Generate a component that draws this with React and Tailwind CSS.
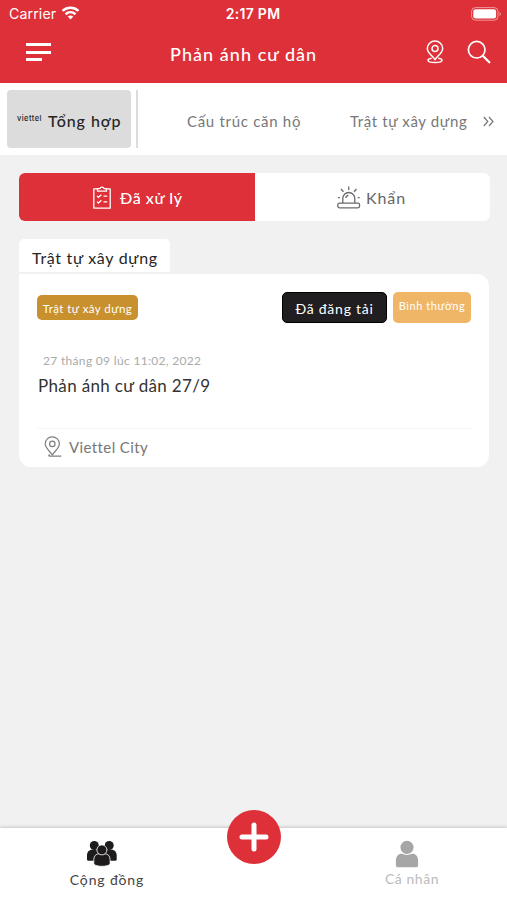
import React from 'react';

function WifiIcon() {
  return (
    <svg width="19" height="14" viewBox="0 0 18 14" fill="none" stroke="#fff" strokeWidth="2.500">
      <path d="M1 4.9C5.6.7 12.4.7 17 4.9" />
      <path d="M4 8.2c2.9-2.6 7.100-2.600 10 0" />
      <path d="M6.200 10.600a3.900 3.900 0 0 1 5.600 0L9 13.500z" fill="#fff" stroke="none" />
    </svg>
  );
}

function BatteryIcon() {
  return (
    <svg width="31" height="14" viewBox="0 0 31 14" fill="none">
      <rect x=".6" y=".6" width="26.400" height="12.600" rx="3.800" stroke="#fff" strokeOpacity=".5" />
      <rect x="2.300" y="2.200" width="22.800" height="9.400" rx="2.300" fill="#fff" />
      <path d="M28.500 5c1.900.8 1.900 3.200 0 4z" fill="#fff" fillOpacity=".5" />
    </svg>
  );
}

function HeaderPin() {
  return (
    <svg width="18" height="24" viewBox="0 0 18 24" fill="none" stroke="#fff" strokeWidth="1.500" strokeLinejoin="round">
      <path d="M9 19.700C6.200 15.400 1.300 12.700 1.300 8.400a7.700 7.400 0 0 1 15.400 0c0 4.300-4.900 7-7.700 11.300z" />
      <circle cx="9" cy="8.600" r="3" />
      <path d="M5.700 18.200c-2.400.3-3.700 1-3.700 2 0 1.300 2.800 2.300 7 2.300s7-1 7-2.300c0-1-1.300-1.700-3.700-2" />
    </svg>
  );
}

function SearchIcon() {
  return (
    <svg width="24" height="24" viewBox="0 0 24 24" fill="none" stroke="#fff" strokeLinecap="round">
      <circle cx="9.700" cy="9.700" r="8.300" strokeWidth="1.700" />
      <path d="m16 16 6.300 6.200" strokeWidth="2.300" />
    </svg>
  );
}

function ClipboardIcon() {
  return (
    <svg width="18" height="23" viewBox="0 0 18 23" fill="none" stroke="#fff" strokeWidth="1.300" strokeLinejoin="round">
      <path d="M4.500 2.800H.8v19.400h16.400V2.800h-3.700" />
      <path d="M4.500 5.200V2.700h2.300a2.300 2.300 0 0 1 4.400 0h2.300v2.500z" />
      <path d="m4 10 1.400 1.300L8.400 8.800M10.500 10.200h3.700M4 15.600 5.400 17l3-2.700M10.500 15.800h3.700" />
    </svg>
  );
}

function SirenIcon() {
  return (
    <svg width="24" height="23" viewBox="0 0 24 23" fill="none" stroke="#6c6c6c" strokeWidth="1.300">
      <rect x=".8" y="17.200" width="21.800" height="4.600" rx="1.700" />
      <path d="M5.800 17v-4.500a6 6 0 0 1 12 0V17M8.800 12c.2-1.500 1-2.500 2.600-2.700M11.700.6v3.400M4 3l2.500 2.800M19.500 3l-2.500 2.800M.9 11.600h2M20.700 11.600h2" />
    </svg>
  );
}

function PlacePin() {
  return (
    <svg width="18" height="22" viewBox="0 0 18 22" fill="none" stroke="#808080" strokeWidth="1.200">
      <path d="M8.300 19C5.700 15 1.200 12 1.200 7.800a7.100 7 0 0 1 14.200 0c0 4.200-4.500 7.200-7.100 11.200z" />
      <circle cx="8.300" cy="7.900" r="2.700" />
      <path d="M5.700 18.600c-1 .3-1.300 1.300-.2 1.600h11.800" />
    </svg>
  );
}

function GroupIcon() {
  return (
    <svg width="32" height="27" viewBox="0 0 32 27" fill="#1d1b1c">
      <circle cx="8.300" cy="5.500" r="4.500" />
      <circle cx="23.200" cy="5.500" r="4.500" />
      <path d="M1 20v-4.500c0-3.400 2-5.700 5-5.700h5l4 11H2zM30.700 20v-4.500c0-3.400-2-5.700-5-5.700h-5l-4 11h13z" />
      <path d="M7.800 24.200V19.500c0-3.500 2.400-5.700 5-5.700h6.200c2.700 0 5.100 2.200 5.100 5.700v4.700c-3.300 2.800-13 2.800-16.300 0z" stroke="#fff" strokeWidth=".8" />
      <circle cx="15.900" cy="9.900" r="5" stroke="#fff" strokeWidth=".8" />
    </svg>
  );
}

function PersonIcon() {
  return (
    <svg width="24" height="28" viewBox="0 0 24 28" fill="#a6a6a6">
      <path d="M.9 25v-4.500c0-4 2.800-6.700 5.300-6.700h11.600c2.500 0 5.300 2.700 5.300 6.700V25c0 1.500-.9 2.300-2.300 2.300H3.200C1.800 27.300.9 26.500.9 25z" />
      <circle cx="12" cy="7.300" r="7.200" stroke="#fff" strokeWidth="1.200" />
    </svg>
  );
}

function StatusBar() {
  return (
    <div className="flex h-[27px] items-center pl-[9px] pr-[5px] font-['Inter']">
      <div className="flex flex-1 items-center gap-[5px]">
        <span className="text-[14.200px] tracking-[0.100px]">Carrier</span>
        <WifiIcon />
      </div>
      <span className="mr-[5px] text-[14px] font-semibold tracking-[0.300px]">2:17 PM</span>
      <div className="flex flex-1 justify-end"><BatteryIcon /></div>
    </div>
  );
}

function Header() {
  return (
    <header className="h-[83px] bg-[#dd3038] text-white">
      <StatusBar />
      <div className="flex h-[50px] items-center pl-[26px] pr-[16px]">
        <div className="flex w-[144px] flex-col gap-[4.500px]">
          <span className="h-[3px] w-[25px] bg-white" />
          <span className="h-[3px] w-[25px] bg-white" />
          <span className="h-[3px] w-[16px] bg-white" />
        </div>
        <h1 className="flex-1 whitespace-nowrap pt-[4px] text-[18px] font-medium tracking-[1.050px]">Phản ánh cư dân</h1>
        <div className="flex items-center gap-[23px]">
          <HeaderPin />
          <SearchIcon />
        </div>
      </div>
    </header>
  );
}

function Categories() {
  return (
    <nav className="flex h-[72px] items-center whitespace-nowrap bg-white pl-[7px] text-[15px] text-[#777]">
      <div className="flex h-[58px] w-[124px] items-center rounded-[4px] bg-[#dcdcdc] pl-[10px] pt-[3px] text-[#252525]">
        <span className="w-[31px] pb-[4px] font-['Inter'] text-[7.500px] font-medium leading-none tracking-[0.450px]">viettel</span>
        <span className="text-[16px] font-medium tracking-[0.950px]">Tổng hợp</span>
      </div>
      <span className="ml-[5px] h-[58px] w-[2px] bg-[#dcdcdc]" />
      <span className="ml-[49px] w-[163px] pt-[4px] tracking-[0.700px]">Cấu trúc căn hộ</span>
      <span className="w-[133px] pt-[4px] tracking-[0.620px]">Trật tự xây dựng</span>
      <svg className="mt-[4px]" width="12" height="13" viewBox="0 0 12 13" fill="none" stroke="#777" strokeWidth="1.200"><path d="m.8 2 4 4.500-4 4.500M6 2l4 4.500L6 11" /></svg>
    </nav>
  );
}

function Tabs() {
  return (
    <div className="flex h-[48px] w-[471px] overflow-hidden rounded-[6px] bg-white text-[16px]">
      <div className="flex w-[236px] items-center gap-[9px] bg-[#dd3038] pl-[74px] font-medium text-white">
        <ClipboardIcon />
        <span className="pt-[2px] tracking-[0.550px]">Đã xử lý</span>
      </div>
      <div className="flex items-center gap-[5px] pl-[82px] text-[#666]">
        <SirenIcon />
        <span className="pt-[2px] tracking-[0.900px]">Khẩn</span>
      </div>
    </div>
  );
}

function Report() {
  return (
    <section className="mt-[18px] whitespace-nowrap">
      <h2 className="h-[33px] w-[151px] rounded-t-[5px] bg-white pl-[13px] text-[16px] leading-[37px] tracking-[0.700px] text-[#252525]">Trật tự xây dựng</h2>
      <article className="mt-[2px] h-[193px] w-[470px] rounded-[12px] rounded-tl-none bg-white pl-[18px] pr-[18px]">
        <div className="flex h-[79px] pt-[18px]">
          <span className="mt-[3px] h-[25px] w-[101px] rounded-[5px] bg-[#c9902e] text-center text-[11.500px] leading-[27px] tracking-[0.450px] text-white">Trật tự xây dựng</span>
          <span className="ml-[144px] h-[31px] w-[105px] rounded-[5px] border border-black bg-[#201e20] text-center text-[14px] leading-[32px] tracking-[0.750px] text-white">Đã đăng tải</span>
          <span className="ml-[6px] h-[31px] w-[78px] rounded-[5px] bg-[#efb667] text-center text-[11px] leading-[28px] tracking-[0.550px] text-white">Bình thường</span>
        </div>
        <p className="pl-[6px] text-[12px] leading-[16px] tracking-[0.320px] text-[#aaa]">27 tháng 09 lúc 11:02, 2022</p>
        <h3 className="mt-[5px] h-[54px] pl-px text-[17px] leading-[24px] tracking-[0.350px] text-[#333]">Phản ánh cư dân 27/9</h3>
        <div className="flex h-[37px] items-center gap-[7px] border-t border-[#f5f5f5] pl-[7px] text-[15px] text-[#777]">
          <PlacePin />
          <span className="pt-px tracking-[0.400px]">Viettel City</span>
        </div>
      </article>
    </section>
  );
}

function BottomBar() {
  return (
    <footer className="relative flex h-[72px] bg-white text-[14px] shadow-[0_-1px_3px_rgba(0,0,0,0.18)]">
      <div className="flex w-[214px] flex-col items-center pt-[12px] text-[#444]">
        <div className="mr-[11px]"><GroupIcon /></div>
        <span className="mt-[3px] leading-[20px] tracking-[0.850px]">Cộng đồng</span>
      </div>
      <div className="ml-auto flex w-[190px] flex-col items-center pt-[12px] text-[#bbb]">
        <div className="mr-[11px]"><PersonIcon /></div>
        <span className="mt-px leading-[20px] tracking-[0.550px]">Cá nhân</span>
      </div>
      <button className="absolute left-[227px] top-[-18px] flex h-[54px] w-[54px] items-center justify-center rounded-full bg-[#dd3038]" aria-label="+">
        <svg width="30" height="30" viewBox="0 0 30 30" stroke="#fff" strokeWidth="5" strokeLinecap="round"><path d="M15 3v24M3 15h24" /></svg>
      </button>
    </footer>
  );
}

export default function App() {
  return (
    <div className="flex h-[900px] w-[507px] flex-col overflow-hidden bg-[#f1f1f1] font-['Lato','Noto_Sans',sans-serif]">
      <Header />
      <Categories />
      <main className="flex-1 pl-[19px] pt-[18px]">
        <Tabs />
        <Report />
      </main>
      <BottomBar />
    </div>
  );
}
